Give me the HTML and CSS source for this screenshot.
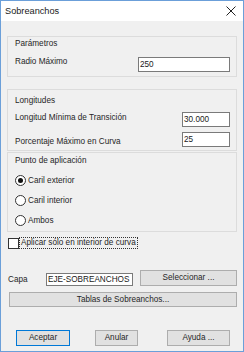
FILE: index.html
```html
<!DOCTYPE html>
<html lang="es">
<head>
  <meta charset="UTF-8">
  <title>Sobreanchos</title>
  <link rel="stylesheet" href="styles.css">
</head>
<body>
  <div class="window">
    <div class="titlebar">
      <span class="title">Sobreanchos</span>
      <svg class="close" width="10" height="10" viewBox="0 0 10 10">
        <path d="M0.5 0.5 L9.5 9.5 M9.5 0.5 L0.5 9.5" stroke="#222" stroke-width="1" fill="none"/>
      </svg>
    </div>

    <div class="content">
      <div class="group group-params">
        <div class="legend">Parámetros</div>
        <div class="row row-radio-max">
          <span class="label">Radio Máximo</span>
          <div class="field field-wide">250</div>
        </div>
      </div>

      <div class="group group-long">
        <div class="legend">Longitudes</div>
        <div class="row row-min">
          <span class="label">Longitud Mínima de Transición</span>
          <div class="field field-short">30.000</div>
        </div>
        <div class="row row-pct">
          <span class="label">Porcentaje Máximo en Curva</span>
          <div class="field field-short">25</div>
        </div>
      </div>

      <div class="group group-punto">
        <div class="legend">Punto de aplicación</div>
        <div class="radios">
          <div class="radio-row"><span class="radio checked"></span>Caril exterior</div>
          <div class="radio-row"><span class="radio"></span>Caril interior</div>
          <div class="radio-row"><span class="radio"></span>Ambos</div>
        </div>
      </div>

      <div class="check-row">
        <span class="checkbox"></span>
        <span class="focus">Aplicar sólo en interior de curva</span>
      </div>

      <div class="capa-row">
        <span class="capa-label">Capa</span>
        <div class="field field-capa">EJE-SOBREANCHOS</div>
        <div class="btn btn-select">Seleccionar ...</div>
      </div>

      <div class="btn btn-tablas">Tablas de Sobreanchos...</div>

      <div class="actions">
        <div class="btn btn-ok">Aceptar</div>
        <div class="btn btn-cancel">Anular</div>
        <div class="btn btn-help">Ayuda ...</div>
      </div>
    </div>
  </div>
</body>
</html>
```

FILE: styles.css
```css
* {
  box-sizing: border-box;
  margin: 0;
  padding: 0;
}

body {
  font-family: "Liberation Sans", Arial, sans-serif;
  font-size: 8.2px;
  color: #262626;
  background: #ffffff;
}

.window {
  width: 244px;
  height: 352px;
  border: 1px solid #6b9fd9;
  background: #f0f0f0;
  display: flex;
  flex-direction: column;
}

/* Title bar */
.titlebar {
  height: 20px;
  background: #ffffff;
  display: flex;
  align-items: center;
  justify-content: space-between;
  padding: 0 7px 0 4px;
}

.title {
  font-size: 9.2px;
  color: #1a1a1a;
}

.close {
  display: block;
}

/* Dialog body */
.content {
  padding: 0 6px 0 6px;
  display: flex;
  flex-direction: column;
}

.group {
  border: 1px solid #dcdcdc;
  padding: 1px 6px 0 7px;
  line-height: 11px;
}

.legend {
  height: 11px;
}

.row {
  display: flex;
  justify-content: space-between;
  align-items: flex-start;
}

.field {
  background: #ffffff;
  border: 1px solid #7a7a7a;
  height: 15px;
  line-height: 13px;
  padding-left: 1px;
  color: #1a1a1a;
}

.field-wide {
  width: 92px;
}

.field-short {
  width: 48px;
}

.group-params {
  margin-top: 15px;
  height: 41px;
}

.row-radio-max {
  margin-top: 8px;
}

.row-radio-max .label {
  margin-top: -1px;
}

.group-long {
  margin-top: 12px;
  padding-top: 5px;
  height: 62px;
}

.row-min {
  margin-top: 6px;
}

.row-pct {
  margin-top: 5px;
}

.row-pct .label {
  margin-top: 4px;
}

.group-punto {
  margin-top: 1px;
  padding-top: 2px;
  height: 80px;
}

.radios {
  margin-top: 4px;
}

.radio-row {
  height: 20px;
  display: flex;
  align-items: center;
}

.radio {
  width: 11px;
  height: 11px;
  border: 1px solid #333;
  border-radius: 50%;
  background: #ffffff;
  margin-right: 2px;
  display: flex;
  align-items: center;
  justify-content: center;
}

.radio.checked::after {
  content: "";
  width: 5px;
  height: 5px;
  border-radius: 50%;
  background: #111;
}

/* Checkbox */
.check-row {
  margin-top: 5px;
  height: 12px;
  display: flex;
  align-items: center;
  margin-left: 1px;
}

.checkbox {
  width: 11px;
  height: 11px;
  border: 1px solid #333;
  background: #ffffff;
}

.focus {
  border: 1px dotted #333;
  height: 12px;
  line-height: 10px;
  padding: 0 1px;
  white-space: nowrap;
}

/* Capa */
.capa-row {
  margin-top: 21px;
  height: 16px;
  display: flex;
  align-items: flex-start;
  margin-left: 1px;
}

.capa-label {
  width: 38px;
  margin-top: 4px;
  line-height: 11px;
}

.field-capa {
  width: 87px;
  height: 13px;
  line-height: 11px;
  margin-top: 3px;
  white-space: nowrap;
  overflow: hidden;
}

/* Buttons */
.btn {
  background: #e1e1e1;
  border: 1px solid #adadad;
  height: 16px;
  line-height: 14px;
  text-align: center;
  color: #262626;
}

.btn-select {
  width: 97px;
  margin-left: 7px;
}

.btn-tablas {
  margin-top: 6px;
  margin-left: 2px;
  width: 228px;
  height: 15px;
  line-height: 13px;
}

.actions {
  margin-top: 23px;
  display: flex;
}

.btn-ok {
  width: 54px;
  margin-left: 9px;
  border-color: #0078d7;
}

.btn-cancel {
  width: 43px;
  margin-left: 25px;
}

.btn-help {
  width: 63px;
  margin-left: 29px;
}
```
